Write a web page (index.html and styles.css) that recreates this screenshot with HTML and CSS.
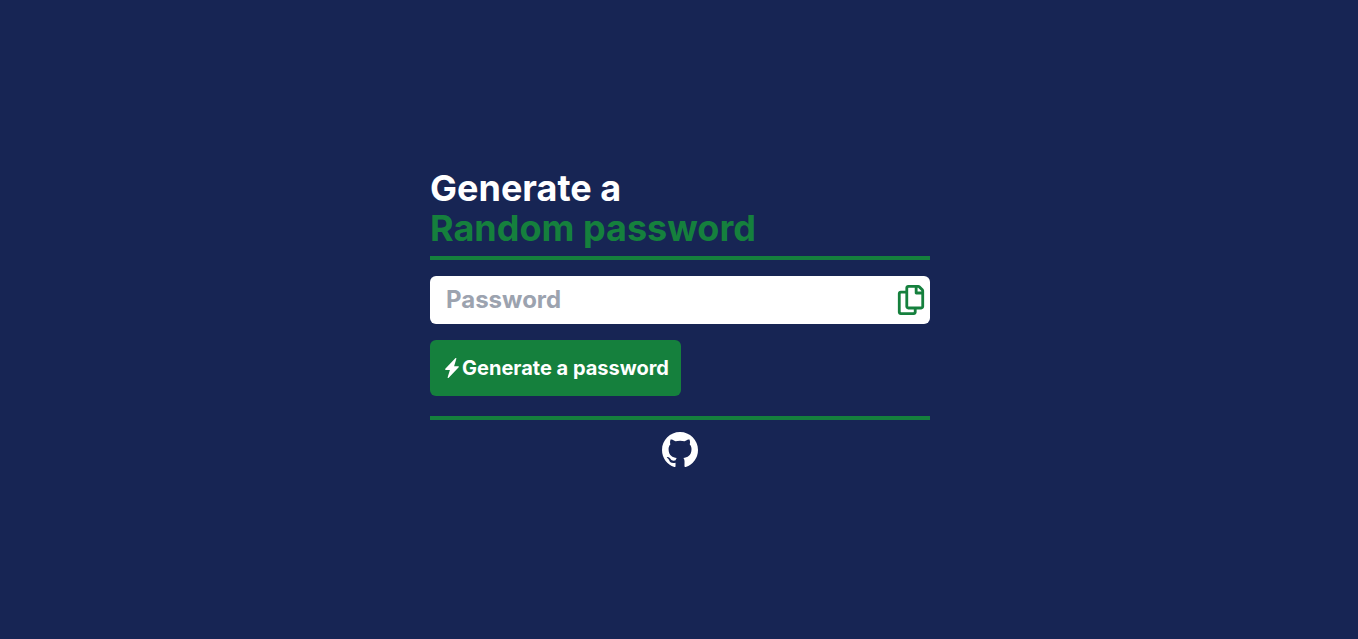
FILE: index.html
```html
<!DOCTYPE html>
<html lang="en">
<head>
<meta charset="utf-8">
<title>Password generator</title>
<link rel="stylesheet" href="styles.css">
</head>
<body>
<main class="generator">
  <h1 class="title">Generate a <span class="title-accent">Random password</span></h1>
  <div class="field">
    <input class="field-input" type="text" placeholder="Password" readonly>
    <button class="copy" aria-label="Copy">
      <svg class="copy-icon" viewBox="0 0 448 512" fill="currentColor"><path d="M433.941 65.941l-51.882-51.882A48 48 0 0 0 348.118 0H176c-26.510 0-48 21.490-48 48v48H48c-26.510 0-48 21.490-48 48v320c0 26.510 21.490 48 48 48h224c26.510 0 48-21.490 48-48v-48h80c26.510 0 48-21.490 48-48V99.882a48 48 0 0 0-14.059-33.941zM266 464H54a6 6 0 0 1-6-6V150a6 6 0 0 1 6-6h74v224c0 26.510 21.490 48 48 48h96v42a6 6 0 0 1-6 6zm128-96H182a6 6 0 0 1-6-6V54a6 6 0 0 1 6-6h106v88c0 13.255 10.745 24 24 24h88v202a6 6 0 0 1-6 6zm6-256h-64V48h9.632c1.591 0 3.117.632 4.243 1.757l48.368 48.368a6 6 0 0 1 1.757 4.243V112z"/></svg>
    </button>
  </div>
  <button class="generate">
    <svg class="bolt" viewBox="0 0 16 16" fill="currentColor"><path d="M11.251.068a.5.5 0 0 1 .227.580L9.677 6.500H13a.5.5 0 0 1 .364.843l-8 8.500a.5.5 0 0 1-.842-.490L6.323 9.500H3a.5.5 0 0 1-.364-.843l8-8.500a.5.5 0 0 1 .615-.090z"/></svg>
    <span>Generate a password</span>
  </button>
  <footer class="footer">
    <svg class="github" viewBox="0 0 16 16" fill="currentColor"><path d="M8 0C3.580 0 0 3.580 0 8c0 3.540 2.290 6.530 5.470 7.590.4.070.55-.17.55-.38 0-.19-.01-.82-.01-1.490-2.010.37-2.530-.49-2.690-.94-.09-.23-.48-.94-.82-1.130-.28-.15-.68-.52-.01-.53.63-.01 1.080.58 1.230.82.72 1.210 1.870.87 2.330.66.070-.52.28-.87.51-1.070-1.780-.2-3.640-.89-3.640-3.950 0-.87.31-1.590.82-2.150-.08-.2-.36-1.020.08-2.120 0 0 .67-.21 2.200.82.64-.18 1.320-.27 2-.27s1.360.09 2 .27c1.530-1.040 2.200-.82 2.200-.82.44 1.100.16 1.920.08 2.120.51.56.82 1.270.82 2.150 0 3.070-1.870 3.750-3.650 3.950.29.25.54.73.54 1.480 0 1.070-.01 1.930-.01 2.200 0 .21.15.46.55.38A8.010 8.010 0 0 0 16 8c0-4.420-3.580-8-8-8z"/></svg>
  </footer>
</main>
</body>
</html>
```
FILE: styles.css
```css
* { box-sizing: border-box; }
body {
  margin: 0;
  min-height: 100vh;
  display: flex;
  justify-content: center;
  align-items: flex-start;
  background: #172554;
  color: #fff;
  font-family: Inter, sans-serif;
}
.generator { width: 500px; margin: 168px 0 0 2px; }
.title {
  margin: 0 0 16px;
  padding-bottom: 8px;
  border-bottom: 4px solid #15803d;
  font-size: 36px;
  line-height: 40px;
  font-weight: 700;
}
.title-accent { display: block; color: #15803d; }
.field {
  display: flex;
  align-items: center;
  height: 48px;
  padding: 0 4px 0 16px;
  background: #fff;
  border-radius: 6px;
}
.field-input {
  flex: 1;
  min-width: 0;
  padding: 0;
  border: 0;
  outline: 0;
  background: transparent;
  font: 700 24px/32px Inter, sans-serif;
}
.field-input::placeholder { color: #9ca3af; opacity: 1; }
.copy { padding: 0; border: 0; background: none; color: #15803d; }
.copy-icon { display: block; width: 30px; height: 30px; }
.generate {
  display: flex;
  align-items: center;
  height: 56px;
  margin: 16px 0 20px;
  padding: 0 12px;
  border: 0;
  border-radius: 6px;
  background: #15803d;
  color: #fff;
  font: 700 20px/28px Inter, sans-serif;
}
.bolt { width: 20px; height: 20px; }
.footer {
  display: flex;
  justify-content: center;
  padding-top: 12px;
  border-top: 4px solid #15803d;
}
.github { width: 36px; height: 36px; }
```
